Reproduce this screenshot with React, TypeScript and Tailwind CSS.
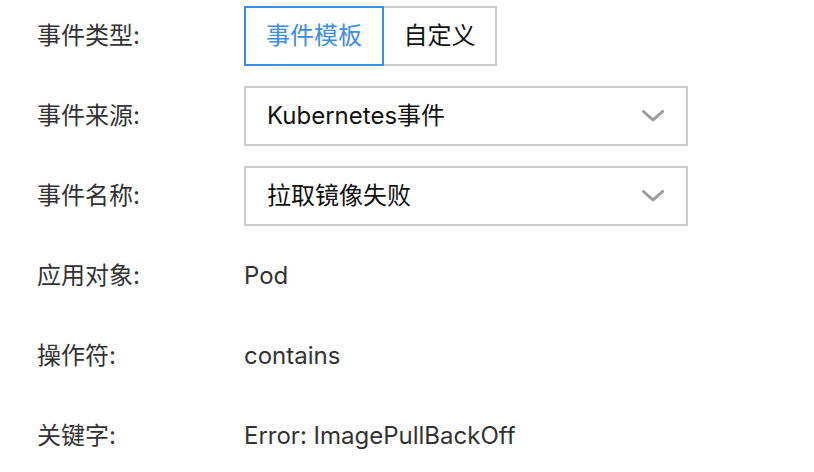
import React from "react";

const font = { fontFamily: '"Inter", "Noto Sans CJK SC", sans-serif' };

const Chevron: React.FC = () => (
  <svg width="22" height="12" viewBox="0 0 22 12" fill="none">
    <polyline points="1.5,1.5 11,10 20.5,1.5" stroke="#9a9a9a" strokeWidth="3" strokeLinecap="round" strokeLinejoin="round" />
  </svg>
);

const Row: React.FC<{ label: string; children: React.ReactNode }> = ({ label, children }) => (
  <div className="flex items-center h-[60px]">
    <div className="w-[207px] shrink-0 text-[24px] text-[#333]">{label}</div>
    {children}
  </div>
);

const Select: React.FC<{ value: string }> = ({ value }) => (
  <div className="flex items-center justify-between w-[444px] h-[60px] border-2 border-[#cccccc] pl-[21px] pr-[22px] text-[24px] text-[#111]">
    <span>{value}</span>
    <Chevron />
  </div>
);

export default function App() {
  return (
    <div className="bg-white w-[814px] h-[472px] pt-[6px] pl-[37px] flex flex-col gap-[20px]" style={font}>
      <Row label="事件类型:">
        <div className="flex h-[60px] text-[24px]">
          <div className="w-[140px] flex items-center justify-center border-2 border-[#3b8ee4] text-[#3b8ee4]">
            事件模板
          </div>
          <div className="w-[113px] flex items-center justify-center border-2 border-l-0 border-[#cccccc] text-[#111]">
            自定义
          </div>
        </div>
      </Row>
      <Row label="事件来源:">
        <Select value="Kubernetes事件" />
      </Row>
      <Row label="事件名称:">
        <Select value="拉取镜像失败" />
      </Row>
      <Row label="应用对象:">
        <span className="text-[24px] text-[#333]">Pod</span>
      </Row>
      <Row label="操作符:">
        <span className="text-[24px] text-[#333]">contains</span>
      </Row>
      <Row label="关键字:">
        <span className="text-[24px] text-[#333]">Error: ImagePullBackOff</span>
      </Row>
    </div>
  );
}
